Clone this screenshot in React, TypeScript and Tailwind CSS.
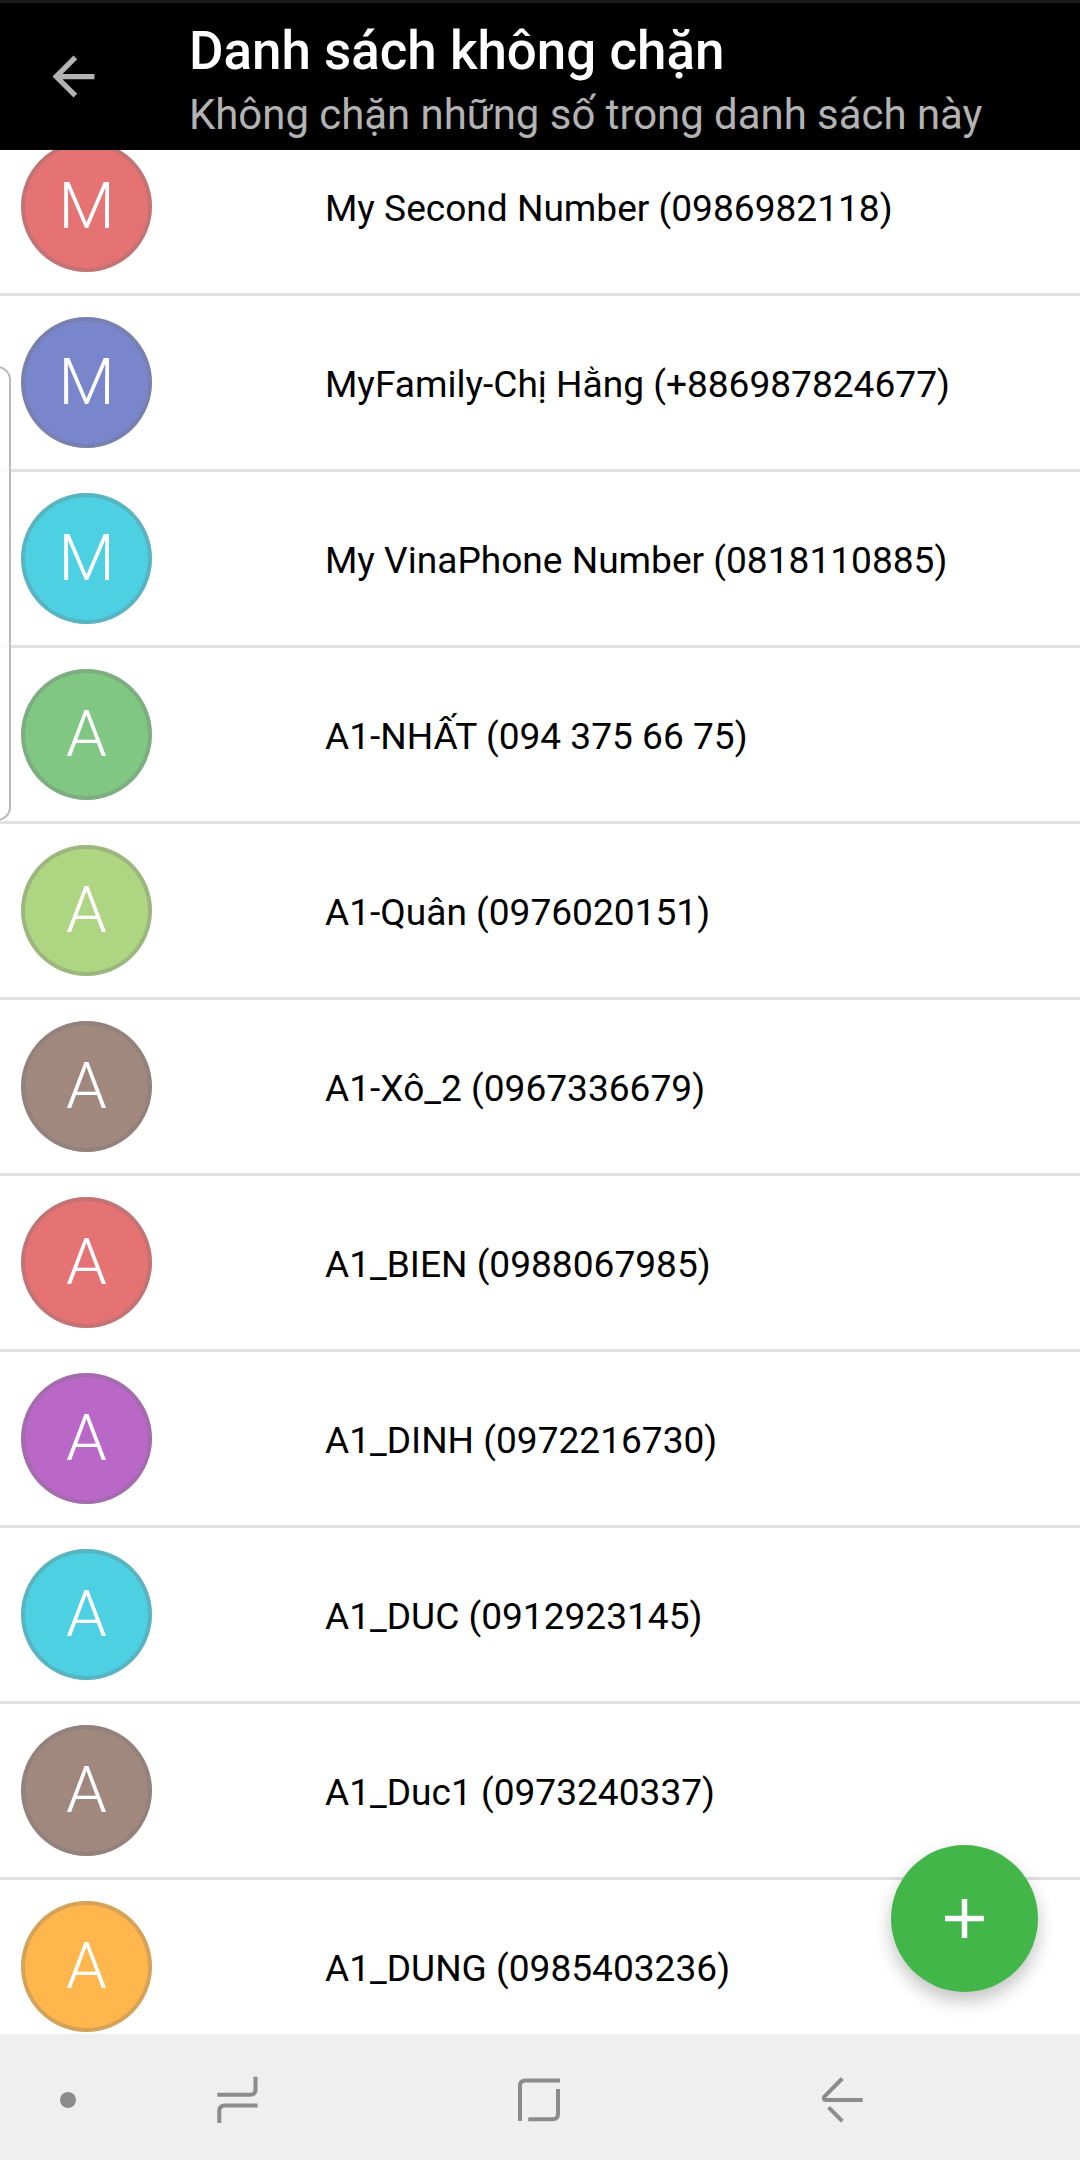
import { clsx } from "clsx";

interface Contact {
    name: string;
    phone: string;
    color: string;
}

const contacts: Contact[] = [
    { name: "My Second Number", phone: "0986982118", color: "bg-[#e57373]" },
    { name: "MyFamily-Chị Hằng", phone: "+886987824677", color: "bg-[#7986cb]" },
    { name: "My VinaPhone Number", phone: "0818110885", color: "bg-[#4dd0e1]" },
    { name: "A1-NHẤT", phone: "094 375 66 75", color: "bg-[#81c784]" },
    { name: "A1-Quân", phone: "0976020151", color: "bg-[#aed581]" },
    { name: "A1-Xô_2", phone: "0967336679", color: "bg-[#a1887f]" },
    { name: "A1_BIEN", phone: "0988067985", color: "bg-[#e57373]" },
    { name: "A1_DINH", phone: "0972216730", color: "bg-[#ba68c8]" },
    { name: "A1_DUC", phone: "0912923145", color: "bg-[#4dd0e1]" },
    { name: "A1_Duc1", phone: "0973240337", color: "bg-[#a1887f]" },
    { name: "A1_DUNG", phone: "0985403236", color: "bg-[#ffb74d]" },
];

function Header() {
    return (
        <header className="h-[150px] shrink-0 flex bg-black border-t-[3px] border-[#1a1a1a]">
            <button className="w-[189px] shrink-0 pl-[42px] pt-[42px] flex items-start" aria-label="Back">
                <svg viewBox="0 0 24 24" className="size-[63px] fill-[#b3b3b3]">
                    <path d="M20 11H7.83l5.59-5.59L12 4l-8 8 8 8 1.41-1.41L7.83 13H20v-2z" />
                </svg>
            </button>
            <div className="pt-[16px] whitespace-nowrap">
                <h1 className="text-[52.9px] leading-[64px] font-medium text-white">Danh sách không chặn</h1>
                <p className="text-[41.9px] leading-[64px] text-[#b3b3b3]">Không chặn những số trong danh sách này</p>
            </div>
        </header>
    );
}

function ContactRow({ contact }: { contact: Contact }) {
    return (
        <li className="h-[176px] shrink-0 flex items-center pl-[21px] border-b-[3px] border-[#e0e0e0]">
            <div
                className={clsx(
                    "size-[131px] pb-[1px] rounded-full flex items-center justify-center text-[65.5px] leading-none font-light text-white inset-ring-4 inset-ring-[#757575]/30",
                    contact.color
                )}
            >
                {contact.name[0]}
            </div>
            <span className="ml-[173px] pt-[5px] text-[37.1px] leading-[44px] text-black whitespace-nowrap">
                {contact.name} ({contact.phone})
            </span>
        </li>
    );
}

function NavBar() {
    return (
        <nav className="h-[126px] shrink-0 flex items-center pl-[60px] pt-[6px] bg-[#efefef]">
            <span className="size-[16px] rounded-full bg-[#8c8c8c]" />
            <svg viewBox="0 0 56 56" className="size-[56px] ml-[134px] fill-none stroke-[#8c8c8c] stroke-4">
                <path d="M7.3 22.7H40q5.5 0 5.5-5.5V4.7" />
                <path d="M47.6 33.4H15q-5.7 0-5.7 5.5V51" />
            </svg>
            <svg viewBox="0 0 56 56" className="size-[56px] ml-[245px] fill-none stroke-[#8c8c8c] stroke-4">
                <path d="M9 49V14q0-5.5 5.5-5.5H49" />
                <path d="M47 17V42q0 5.3-5.5 5.3H17.3" />
            </svg>
            <svg viewBox="0 0 56 56" className="size-[56px] ml-[248px] fill-none stroke-[#8c8c8c] stroke-4">
                <path d="M27.3 6.5L9.6 24.4q-2.2 3.6 1.6 3.6H47.7" />
                <path d="M13.6 35.3L27.3 49.2" />
            </svg>
        </nav>
    );
}

export default function App() {
    return (
        <div className="relative w-[1080px] h-[2160px] flex flex-col overflow-hidden bg-white font-[Roboto,sans-serif]">
            <Header />
            <main className="flex-1 min-h-0 overflow-hidden">
                {/* list is scrolled a little, so the first row sits partly under the header */}
                <ul className="-mt-[30px] flex flex-col">
                    {contacts.map((contact) => (
                        <ContactRow key={contact.phone} contact={contact} />
                    ))}
                </ul>
            </main>
            <NavBar />

            {/* edge panel handle */}
            <div className="absolute -left-[20px] top-[366px] w-[31px] h-[455px] rounded-[14px] border-2 border-[#bababa] bg-white/80" />

            <button
                className="absolute left-[891px] top-[1845px] size-[147px] rounded-full flex items-center justify-center bg-[#43b649] shadow-[0_9px_18px_rgba(0,0,0,0.24)]"
                aria-label="Add"
            >
                <svg viewBox="0 0 39 39" className="size-[39px] stroke-white stroke-[5.5]">
                    <path d="M19.5 0v39M0 19.5h39" />
                </svg>
            </button>
        </div>
    );
}
